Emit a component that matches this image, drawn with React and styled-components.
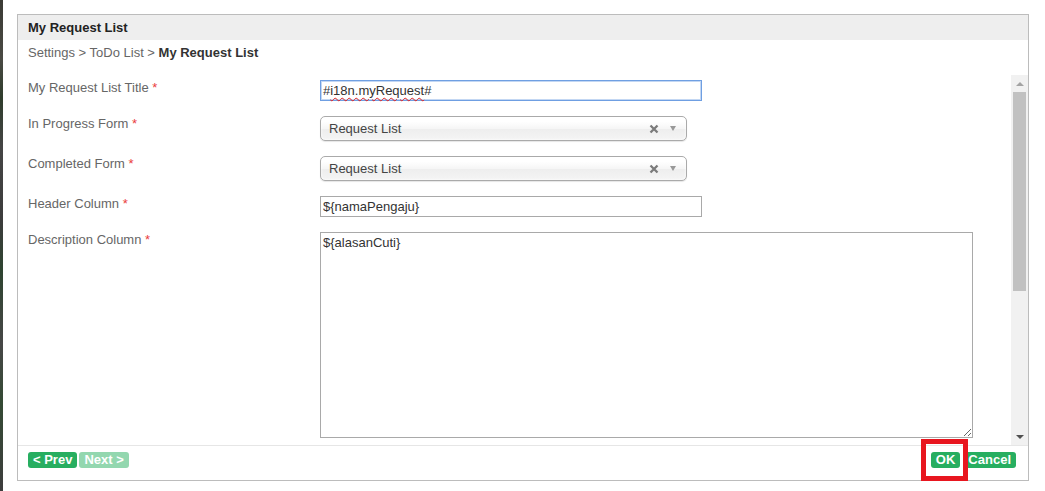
import React from 'react';
import styled, { createGlobalStyle } from 'styled-components';

const GlobalStyle = createGlobalStyle`
  html, body {
    margin: 0;
    padding: 0;
    background: #fff;
  }
  body {
    font-family: 'Liberation Sans', Arial, sans-serif;
    font-size: 13px;
    color: #333;
  }
`;

const fields = [
  { label: 'My Request List Title', type: 'title', value: '#i18n.myRequest#' },
  { label: 'In Progress Form', type: 'select', value: 'Request List' },
  { label: 'Completed Form', type: 'select', value: 'Request List' },
  { label: 'Header Column', type: 'text', value: '${namaPengaju}' },
  { label: 'Description Column', type: 'area', value: '${alasanCuti}' },
];

const App = () => {
  const renderField = (field) => {
    if (field.type === 'title') {
      return (
        <TitleInput>
          #<Misspelled>i18n.myRequest</Misspelled>#
        </TitleInput>
      );
    }
    if (field.type === 'select') {
      return (
        <ChosenSelect>
          <span>{field.value}</span>
          <SelectIcons>
            <svg width="10" height="10" viewBox="0 0 10 10">
              <path d="M1.5 1.5 L8.5 8.5 M8.5 1.5 L1.5 8.5" stroke="#7b7b7b" strokeWidth="2.3" />
            </svg>
            <DropArrow />
          </SelectIcons>
        </ChosenSelect>
      );
    }
    if (field.type === 'area') {
      return <TextArea defaultValue={field.value} spellCheck={false} />;
    }
    return <TextInput defaultValue={field.value} spellCheck={false} />;
  };

  return (
    <>
      <GlobalStyle />
      <Page>
        <BackdropStrip />
        <Stage>
          <Dialog>
            <DialogHeader>My Request List</DialogHeader>
            <Breadcrumb>
              Settings &gt; ToDo List &gt; <strong>My Request List</strong>
            </Breadcrumb>
            <ScrollBody>
              <FormGrid>
                {fields.map((field) => (
                  <React.Fragment key={field.label}>
                    <Label>
                      {field.label} <Required>*</Required>
                    </Label>
                    <div>{renderField(field)}</div>
                  </React.Fragment>
                ))}
              </FormGrid>
              <ScrollBar>
                <ScrollButton>
                  <ArrowUp />
                </ScrollButton>
                <ScrollThumb />
                <ScrollTrack />
                <ScrollButton>
                  <ArrowDown />
                </ScrollButton>
              </ScrollBar>
            </ScrollBody>
            <Footer>
              <ButtonGroup>
                <GreenButton>&lt; Prev</GreenButton>
                <GreenButton disabled>Next &gt;</GreenButton>
              </ButtonGroup>
              <ButtonGroup $gap={3}>
                <Highlighted>
                  <GreenButton>OK</GreenButton>
                </Highlighted>
                <GreenButton>Cancel</GreenButton>
              </ButtonGroup>
            </Footer>
          </Dialog>
        </Stage>
      </Page>
    </>
  );
};

const Page = styled.div`
  display: flex;
  width: 1045px;
  height: 491px;
`;

const BackdropStrip = styled.div`
  width: 3px;
  background: linear-gradient(
    180deg,
    #3b3b35 0%,
    #4a4a44 12%,
    #2f3d2c 20%,
    #454545 30%,
    #3c3c3c 45%,
    #2e4430 55%,
    #474747 70%,
    #344a34 82%,
    #3d3d3d 100%
  );
`;

const Stage = styled.div`
  flex: 1;
  padding: 14px 16px 10px 14px;
`;

const Dialog = styled.div`
  height: 467px;
  box-sizing: border-box;
  border: 1px solid #bcbcbc;
  display: flex;
  flex-direction: column;
  background: #fff;
`;

const DialogHeader = styled.div`
  height: 25px;
  line-height: 25px;
  padding-left: 10px;
  background: #eeeeee;
  font-weight: bold;
  color: #222;
`;

const Breadcrumb = styled.div`
  height: 35px;
  box-sizing: border-box;
  padding: 5px 10px 0;
  line-height: 15px;
  color: #666;

  strong {
    color: #333;
  }
`;

const ScrollBody = styled.div`
  height: 370px;
  display: flex;
`;

const FormGrid = styled.div`
  flex: 1;
  display: grid;
  grid-template-columns: 292px 1fr;
  grid-auto-rows: min-content;
  row-gap: 15px;
  padding: 5px 0 0 10px;
`;

const Label = styled.div`
  line-height: 15px;
  color: #666;
`;

const Required = styled.span`
  color: #ea3c3c;
`;

const fieldBase = `
  box-sizing: border-box;
  font-family: 'Liberation Sans', Arial, sans-serif;
  font-size: 13px;
  color: #333;
  background: #fff;
  outline: none;
`;

const TitleInput = styled.div`
  ${fieldBase}
  width: 382px;
  height: 21px;
  line-height: 17px;
  padding: 1px 2px;
  border: 1px solid #6f9fe2;
  box-shadow: inset 0 0 0 1px #c3d7f3;
`;

const Misspelled = styled.span`
  text-decoration: underline wavy #e02020;
  text-decoration-thickness: 1px;
  text-underline-offset: 2px;
`;

const TextInput = styled.input`
  ${fieldBase}
  display: block;
  width: 382px;
  height: 21px;
  padding: 0 2px;
  border: 1px solid #a9a9a9;
`;

const TextArea = styled.textarea`
  ${fieldBase}
  display: block;
  width: 653px;
  height: 206px;
  padding: 2px 2px;
  border: 1px solid #a9a9a9;
  resize: both;
`;

const ChosenSelect = styled.div`
  box-sizing: border-box;
  width: 367px;
  height: 25px;
  padding: 0 8px;
  display: flex;
  align-items: center;
  justify-content: space-between;
  border: 1px solid #aaa;
  border-radius: 5px;
  color: #444;
  background: linear-gradient(#ffffff 20%, #f6f6f6 50%, #eeeeee 52%, #f4f4f4 100%);
  box-shadow: 0 0 3px #fff inset, 0 1px 1px rgba(0, 0, 0, 0.1);
`;

const SelectIcons = styled.div`
  display: flex;
  align-items: center;
  gap: 11px;
  padding-right: 2px;
`;

const DropArrow = styled.span`
  width: 0;
  height: 0;
  border-left: 3px solid transparent;
  border-right: 3px solid transparent;
  border-top: 5px solid #999;
`;

const ScrollBar = styled.div`
  width: 17px;
  display: flex;
  flex-direction: column;
  background: #f1f1f1;
`;

const ScrollButton = styled.div`
  height: 17px;
  display: flex;
  align-items: center;
  justify-content: center;
`;

const ArrowUp = styled.span`
  width: 0;
  height: 0;
  border-left: 4px solid transparent;
  border-right: 4px solid transparent;
  border-bottom: 4px solid #a3a3a3;
`;

const ArrowDown = styled(ArrowUp)`
  border-bottom: none;
  border-top: 4px solid #505050;
`;

const ScrollThumb = styled.div`
  height: 199px;
  margin: 0 2px;
  background: #c1c1c1;
`;

const ScrollTrack = styled.div`
  flex: 1;
`;

const Footer = styled.div`
  height: 35px;
  box-sizing: border-box;
  border-top: 1px solid #e6e6e6;
  padding: 6px 12px 0 10px;
  display: flex;
  justify-content: space-between;
  align-items: flex-start;
`;

const ButtonGroup = styled.div`
  display: flex;
  gap: ${(props) => props.$gap || 2}px;
`;

const GreenButton = styled.button`
  height: 16px;
  padding: 0 5px;
  border: none;
  border-radius: 3px;
  background: #27ae60;
  color: #fff;
  font-family: 'Liberation Sans', Arial, sans-serif;
  font-size: 13px;
  font-weight: bold;
  line-height: 16px;
  cursor: pointer;

  &:disabled {
    background: #93d7af;
    cursor: default;
  }
`;

const Highlighted = styled.div`
  position: relative;
  display: flex;

  &::after {
    content: '';
    position: absolute;
    left: -10px;
    right: -8px;
    top: -13px;
    bottom: -13px;
    border: 5px solid #e8161f;
    pointer-events: none;
  }
`;

export default App;
